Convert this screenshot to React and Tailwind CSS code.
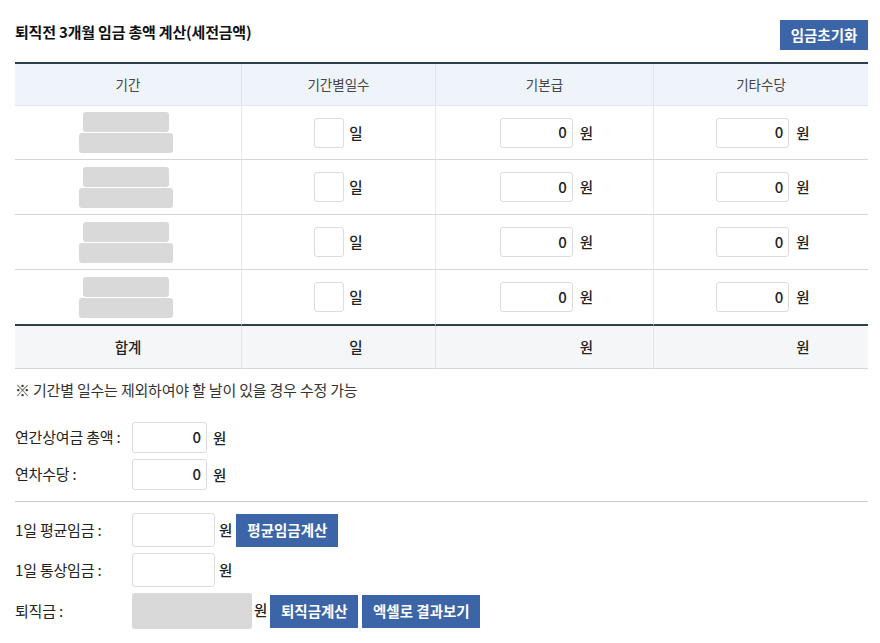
import React from "react";

const FONT = { fontFamily: '"Noto Sans CJK KR", "Noto Sans", sans-serif' };

function DayCell({ blank }) {
  return (
    <div className="flex items-center justify-center gap-[5px]">
      {blank ? (
        <span className="w-[30px] h-[30px]" />
      ) : (
        <span className="w-[30px] h-[30px] border border-[#dcdcdc] rounded-[3px] bg-white" />
      )}
      <span className="text-[14.5px] font-medium text-[#222]">일</span>
    </div>
  );
}

function AmountCell({ blank }) {
  return (
    <div className="flex items-center justify-center gap-[7px] pl-[4px]">
      {blank ? (
        <span className="w-[73px] h-[30px]" />
      ) : (
        <span className="w-[73px] h-[30px] border border-[#dcdcdc] rounded-[3px] bg-white flex items-center justify-end pr-[5px] text-[15px] font-medium text-[#222]">
          0
        </span>
      )}
      <span className="text-[14.5px] font-medium text-[#222]">원</span>
    </div>
  );
}

function PeriodCell() {
  return (
    <div className="flex flex-col items-center gap-[1px] pr-[5px]">
      <span className="w-[86px] h-[20px] bg-[#d9d9d9] rounded-[3px]" />
      <span className="w-[94px] h-[20px] bg-[#d9d9d9] rounded-[3px]" />
    </div>
  );
}

function BlueButton({ children, className = "" }) {
  return (
    <button
      className={
        "bg-[#3b65a6] text-white font-bold text-[14.5px] leading-none flex items-center justify-center " +
        className
      }
    >
      {children}
    </button>
  );
}

export default function App() {
  const rows = [54, 55, 55, 54];
  return (
    <div className="w-[880px] h-[643px] bg-white text-[#222] pl-[15px] pr-[12px]" style={FONT}>
      <div className="flex items-start justify-between pt-[20px] h-[50px]">
        <h1 className="mt-[2px] leading-[20px] font-bold text-[15px] tracking-[-0.2px] text-[#111]">
          퇴직전 3개월 임금 총액 계산(세전금액)
        </h1>
        <BlueButton className="w-[88px] h-[30px]">임금초기화</BlueButton>
      </div>

      <div className="mt-[12px] border-t-2 border-[#2f3e4c]">
        <div className="grid grid-cols-[227px_194px_218px_214px]">
          {["기간", "기간별일수", "기본급", "기타수당"].map((h, i) => (
            <div
              key={h}
              className={
                "h-[42px] bg-[#eff4fb] flex items-center justify-center text-[13.5px] text-[#444] border-b border-[#e2e6ea] " +
                (i < 3 ? "border-r border-r-[#e2e6ea]" : "")
              }
            >
              {h}
            </div>
          ))}
          {rows.map((h, r) => {
            const last = r === rows.length - 1;
            const b = last ? "border-b-2 border-[#2f3e4c]" : "border-b border-[#d6d6d6]";
            const style = { height: h + (last ? 2 : 0) };
            return (
              <React.Fragment key={r}>
                <div className={"flex items-center justify-center border-r border-r-[#e6e8eb] " + b} style={style}>
                  <PeriodCell />
                </div>
                <div className={"flex items-center justify-center border-r border-r-[#e6e8eb] " + b} style={style}>
                  <DayCell />
                </div>
                <div className={"flex items-center justify-center border-r border-r-[#e6e8eb] " + b} style={style}>
                  <AmountCell />
                </div>
                <div className={"flex items-center justify-center " + b} style={style}>
                  <AmountCell />
                </div>
              </React.Fragment>
            );
          })}
          <div className="h-[43px] bg-[#f5f6f8] border-b border-[#d6d6d6] border-r border-r-[#e2e4e7] flex items-center justify-center text-[14.5px] font-medium text-[#222]">
            합계
          </div>
          <div className="h-[43px] bg-[#f5f6f8] border-b border-[#d6d6d6] border-r border-r-[#e2e4e7] flex items-center justify-center">
            <DayCell blank />
          </div>
          <div className="h-[43px] bg-[#f5f6f8] border-b border-[#d6d6d6] border-r border-r-[#e2e4e7] flex items-center justify-center">
            <AmountCell blank />
          </div>
          <div className="h-[43px] bg-[#f5f6f8] border-b border-[#d6d6d6] flex items-center justify-center">
            <AmountCell blank />
          </div>
        </div>
      </div>

      <p className="mt-[11px] text-[15px] text-[#333] tracking-[-0.2px] leading-[20px]">
        ※ 기간별 일수는 제외하여야 할 날이 있을 경우 수정 가능
      </p>

      <div className="mt-[22px] flex flex-col gap-[6px]">
        {["연간상여금 총액 :", "연차수당 :"].map((l) => (
          <div key={l} className="flex items-center">
            <span className="w-[117px] text-[15px] tracking-[-0.2px]">{l}</span>
            <span className="w-[75px] h-[31px] border border-[#dcdcdc] rounded-[3px] flex items-center justify-end pr-[5px] text-[15px] font-medium">
              0
            </span>
            <span className="ml-[6px] text-[14.5px] font-medium">원</span>
          </div>
        ))}
      </div>

      <div className="mt-[11px] border-t border-[#cfcfcf]" />

      <div className="mt-[11px] flex flex-col gap-[6px]">
        <div className="flex items-center">
          <span className="w-[117px] text-[15px] tracking-[-0.2px]">1일 평균임금 :</span>
          <span className="w-[83px] h-[34px] border border-[#dcdcdc] rounded-[3px]" />
          <span className="ml-[4px] text-[14.5px] font-medium">원</span>
          <BlueButton className="ml-[4px] w-[102px] h-[33px]">평균임금계산</BlueButton>
        </div>
        <div className="flex items-center">
          <span className="w-[117px] text-[15px] tracking-[-0.2px]">1일 통상임금 :</span>
          <span className="w-[83px] h-[34px] border border-[#dcdcdc] rounded-[3px]" />
          <span className="ml-[4px] text-[14.5px] font-medium">원</span>
        </div>
        <div className="flex items-center">
          <span className="w-[117px] text-[15px] tracking-[-0.2px]">퇴직금 :</span>
          <span className="w-[120px] h-[36px] bg-[#d9d9d9] rounded-[3px]" />
          <span className="ml-[2px] text-[14.5px] font-medium self-start mt-[6px]">원</span>
          <BlueButton className="ml-[3px] w-[88px] h-[33px]">퇴직금계산</BlueButton>
          <BlueButton className="ml-[4px] w-[118px] h-[33px]">엑셀로 결과보기</BlueButton>
        </div>
      </div>
    </div>
  );
}
